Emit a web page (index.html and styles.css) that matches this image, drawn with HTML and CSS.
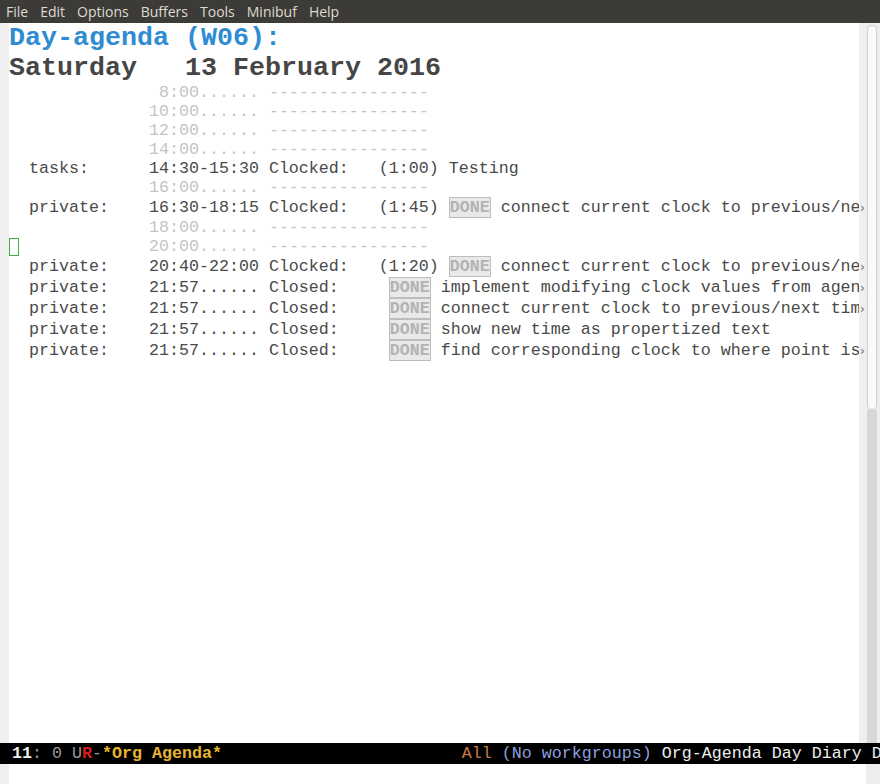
FILE: index.html
```html
<!DOCTYPE html>
<html>
<head>
<meta charset="utf-8">
<link rel="stylesheet" href="styles.css">
</head>
<body>
<div class="app">
  <div class="menubar">
    <span class="menu">File</span>
    <span class="menu">Edit</span>
    <span class="menu">Options</span>
    <span class="menu">Buffers</span>
    <span class="menu">Tools</span>
    <span class="menu">Minibuf</span>
    <span class="menu">Help</span>
  </div>
  <div class="main">
    <div class="lfringe"></div>
    <div class="content">
      <div class="head blue">Day-agenda (W06):</div>
      <div class="head date">Saturday   13 February 2016</div>

      <div class="row"><div class="txt grid">               8:00...... ----------------</div><div class="rf"></div></div>
      <div class="row"><div class="txt grid">              10:00...... ----------------</div><div class="rf"></div></div>
      <div class="row"><div class="txt grid">              12:00...... ----------------</div><div class="rf"></div></div>
      <div class="row"><div class="txt grid">              14:00...... ----------------</div><div class="rf"></div></div>
      <div class="row"><div class="txt">  tasks:      14:30-15:30 Clocked:   (1:00) Testing</div><div class="rf"></div></div>
      <div class="row"><div class="txt grid">              16:00...... ----------------</div><div class="rf"></div></div>
      <div class="row"><div class="txt">  private:    16:30-18:15 Clocked:   (1:45) <span class="done">DONE</span> connect current clock to previous/next time</div><div class="rf"><span class="arrow">›</span></div></div>
      <div class="row"><div class="txt grid">              18:00...... ----------------</div><div class="rf"></div></div>
      <div class="row"><div class="txt grid"><span class="cursor"></span>             20:00...... ----------------</div><div class="rf"></div></div>
      <div class="row"><div class="txt">  private:    20:40-22:00 Clocked:   (1:20) <span class="done">DONE</span> connect current clock to previous/next time</div><div class="rf"><span class="arrow">›</span></div></div>
      <div class="row"><div class="txt">  private:    21:57...... Closed:     <span class="done">DONE</span> implement modifying clock values from agenda</div><div class="rf"><span class="arrow">›</span></div></div>
      <div class="row"><div class="txt">  private:    21:57...... Closed:     <span class="done">DONE</span> connect current clock to previous/next time</div><div class="rf"><span class="arrow">›</span></div></div>
      <div class="row"><div class="txt">  private:    21:57...... Closed:     <span class="done">DONE</span> show new time as propertized text</div><div class="rf"></div></div>
      <div class="row"><div class="txt">  private:    21:57...... Closed:     <span class="done">DONE</span> find corresponding clock to where point is</div><div class="rf"><span class="arrow">›</span></div></div>
    </div>
    <div class="scrollbar">
      <div class="thumb"></div>
      <div class="track"></div>
    </div>
  </div>
  <div class="modeline"><span class="ml-white ml-bold"> 11</span><span class="ml-grey">: 0 U</span><span class="ml-red ml-bold">R</span><span class="ml-grey">-</span><span class="ml-gold ml-bold">*Org Agenda*</span>                        <span class="ml-orange">All</span> <span class="ml-blue">(No workgroups)</span><span class="ml-white"> Org-Agenda Day Diary Ddone</span></div>
  <div class="minibuf">
    <div class="lfringe"></div>
    <div class="mb-content"></div>
    <div class="mb-bar"></div>
  </div>
</div>
</body>
</html>
```

FILE: styles.css
```css
html, body {
  margin: 0;
  padding: 0;
  background: #ffffff;
}

.app {
  width: 880px;
  height: 784px;
  display: flex;
  flex-direction: column;
  overflow: hidden;
}

.menubar {
  height: 23px;
  flex: none;
  background: #3c3b37;
  color: #dfdbd2;
  font-family: "Open Sans", "DejaVu Sans", sans-serif;
  font-size: 14px;
  line-height: 23px;
  display: flex;
  gap: 12px;
  padding-left: 6px;
}

.main {
  flex: 1;
  display: flex;
  min-height: 0;
}

.lfringe {
  width: 9px;
  flex: none;
  background: #f0f0f0;
}

.content {
  width: 857px;
  flex: none;
  background: linear-gradient(to right, #ffffff 850px, #f0f0f0 850px);
  font-family: "Liberation Mono", monospace;
  color: #4a4a4a;
}

.head {
  font-size: 26.67px;
  line-height: 30px;
  font-weight: bold;
  white-space: pre;
}

.blue {
  color: #2f8bd2;
}

.date {
  color: #454545;
}

.row {
  display: flex;
  font-size: 16.67px;
  line-height: 19px;
}

.txt {
  width: 850px;
  flex: none;
  overflow: hidden;
  white-space: pre;
}

.grid {
  color: #c4c4c4;
}

.rf {
  width: 7px;
  flex: none;
  display: flex;
  align-items: center;
  justify-content: center;
}

.arrow {
  color: #8a8a8a;
  font-family: "DejaVu Sans", sans-serif;
  font-size: 12px;
  font-weight: bold;
  line-height: 10px;
}

.done {
  display: inline-block;
  line-height: 19px;
  border: 1px solid #bdbdbd;
  background: #e9e9e9;
  color: #b3b3b3;
  font-weight: bold;
}

.cursor {
  display: inline-block;
  width: 10px;
  height: 18px;
  box-sizing: border-box;
  border: 1px solid #3cb43c;
  vertical-align: top;
  margin-top: 1px;
}

.scrollbar {
  width: 14px;
  flex: none;
  background: #ededed;
  display: flex;
  flex-direction: column;
  align-items: flex-end;
  padding: 2px 3px 0 0;
  box-sizing: border-box;
}

.thumb {
  width: 10px;
  height: 385px;
  flex: none;
  box-sizing: border-box;
  border: 1px solid #cfcfcf;
  border-radius: 5px;
  background: #fafafa;
}

.track {
  width: 10px;
  flex: 1;
  background: #d7d7d7;
}

.modeline {
  height: 21px;
  flex: none;
  background: #000000;
  padding-left: 2px;
  font-family: "Liberation Mono", monospace;
  font-size: 16.67px;
  line-height: 21px;
  white-space: pre;
  overflow: hidden;
}

.ml-bold { font-weight: bold; }
.ml-white { color: #eeeeee; }
.ml-grey { color: #9a9a9a; }
.ml-red { color: #d81c1c; }
.ml-gold { color: #e6b530; }
.ml-orange { color: #c97b45; }
.ml-blue { color: #8d9fdc; }

.minibuf {
  height: 20px;
  flex: none;
  display: flex;
}

.mb-content {
  flex: 1;
  background: #ffffff;
}

.mb-bar {
  width: 14px;
  background: #ededed;
}
```
